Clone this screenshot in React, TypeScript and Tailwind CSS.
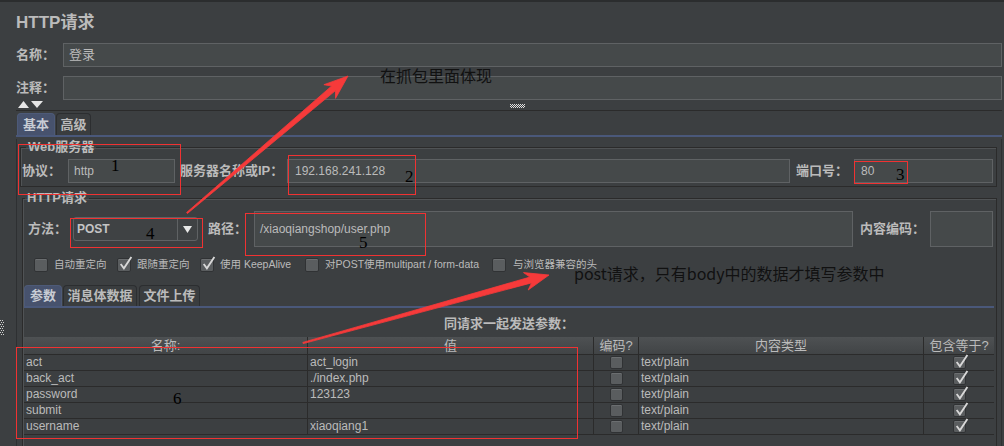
import React from "react";

function Label({ className = "", children }: { className?: string; children?: React.ReactNode }) {
  return <div className={`shrink-0 text-[13px] font-bold leading-[16px] text-[#bbbbbb] ${className}`}>{children}</div>;
}

function Input({ className = "", children }: { className?: string; children?: React.ReactNode }) {
  return (
    <div className={`flex shrink-0 items-center border border-[#5f6264] bg-[#45494a] px-[5px] text-[12px] text-[#bbbbbb] ${className}`}>
      {children}
    </div>
  );
}

function Box({ checked, className = "" }: { checked?: boolean; className?: string }) {
  return (
    <span className={`relative inline-flex shrink-0 rounded-[2px] border border-[#303234] bg-[#5a5d5f] shadow-[inset_0_1px_0_#6b6e70] ${className}`}>
      {checked && (
        <svg viewBox="0 0 14 14" className="absolute -top-[3px] left-0 h-[15px] w-[15px]" fill="none" stroke="#d8d8d8" strokeWidth="1.7">
          <path d="M2.5 7.5 L5.5 11.5 L12.5 1" />
        </svg>
      )}
    </span>
  );
}

function Tab({ active, className = "", children }: { active?: boolean; className?: string; children?: React.ReactNode }) {
  return (
    <div
      className={`flex h-full shrink-0 items-center justify-center rounded-t-[4px] border border-b-0 text-[13px] font-bold ${
        active ? "border-[#4d5a78] bg-[#47526d] text-[#c8ccd4]" : "border-[#2c2e30] bg-[#3a3d3f] text-[#bbbbbb]"
      } ${className}`}
    >
      {children}
    </div>
  );
}

const rows = [
  ["act", "act_login"],
  ["back_act", "./index.php"],
  ["password", "123123"],
  ["submit", ""],
  ["username", "xiaoqiang1"],
];

export default function App() {
  return (
    <div className="relative h-[446px] w-[1004px] overflow-hidden border-t-2 border-[#2b2d2e] bg-[#3c3f41] font-['Liberation_Sans','Noto_Sans_CJK_SC',sans-serif] text-[#bbbbbb]">
      {/* left splitter grip */}
      <svg className="absolute left-0 top-[318px]" width="4" height="16" viewBox="0 0 4 16">
        {[0, 2, 4, 6, 8, 10, 12, 14].map((y) => (
          <g key={y} fill="#d0d0d0">
            <rect x={y % 4 === 0 ? 0 : 1} y={y} width="1" height="1" />
            <rect x={y % 4 === 0 ? 2 : 3} y={y} width="1" height="1" />
          </g>
        ))}
      </svg>

      <div className="pl-[16px] pr-[2px]">
        <div className="mt-[11px] h-[20px] text-[17px] font-bold leading-[20px] text-[#bbbbbb]">HTTP请求</div>

        <div className="mt-[10px] flex items-center">
          <Label className="w-[47px]">名称：</Label>
          <Input className="h-[24px] w-[939px] px-[4px] text-[13px]">登录</Input>
        </div>
        <div className="mt-[9px] flex items-center">
          <Label className="w-[47px]">注释：</Label>
          <Input className="h-[24px] w-[939px]" />
        </div>

        <div className="relative flex h-[11px] items-start border-b border-[#2b2b2b]">
          <svg className="ml-[2px] mt-[1px]" width="26" height="7" viewBox="0 0 26 7">
            <path d="M0 7 L5.5 0 L11 7 Z" fill="#e6e6e6" />
            <path d="M13 0 L25 0 L19 7 Z" fill="#e6e6e6" />
          </svg>
          <svg className="ml-[466px] mt-[4px]" width="15" height="4" viewBox="0 0 15 4">
            {[0, 2, 4, 6, 8, 10, 12, 14].map((x) => (
              <g key={x} fill="#e0e0e0">
                <rect x={x} y={0} width="1" height="1" />
                <rect x={x + 1} y={1} width="1" height="1" />
                <rect x={x} y={2} width="1" height="1" />
                <rect x={x + 1} y={3} width="1" height="1" />
              </g>
            ))}
          </svg>
        </div>

        {/* main tabs */}
        <div className="ml-[1px] mt-[2px] flex h-[22px] items-end">
          <Tab active className="w-[38px]">基本</Tab>
          <Tab className="ml-[1px] h-[20px] w-[35px]">高级</Tab>
        </div>
        <div className="h-[2px] bg-[#4a587a]" />

        <div className="h-[320px] border-x border-[#2e3032]">
          {/* Web服务器 */}
          <fieldset className="ml-[3px] mt-[2px] w-[977px] border border-[#2b2b2b] pb-[3px] pl-[1px] pt-[4px] shadow-[inset_1px_1px_0_#505355]">
            <legend className="ml-[4px] h-[16px] px-[2px] text-[13px] font-bold leading-[16px] text-[#bbbbbb]">Web服务器</legend>
            <div className="flex items-center">
              <Label className="w-[46px]">协议：</Label>
              <Input className="h-[24px] w-[107px]">http</Input>
              <Label className="ml-[5px] w-[107px]">服务器名称或IP：</Label>
              <Input className="h-[24px] w-[503px] px-[7px]">192.168.241.128</Input>
              <Label className="ml-[6px] w-[58px]">端口号：</Label>
              <Input className="h-[24px] w-[139px] px-[6px] text-[#b4bccb]">80</Input>
            </div>
          </fieldset>

          {/* HTTP请求 */}
          <fieldset className="ml-[5px] mt-[3px] h-[280px] w-[975px] border border-[#2b2b2b] pt-[5px] shadow-[inset_1px_1px_0_#505355]">
            <legend className="ml-[2px] h-[16px] px-[2px] text-[13px] font-bold leading-[16px] text-[#bbbbbb]">HTTP请求</legend>
            <div className="flex h-[36px] items-center pl-[5px]">
              <Label className="w-[45px]">方法：</Label>
              <div className="flex h-[24px] w-[125px] shrink-0 items-center rounded-[3px] border border-[#5f6264] bg-[#3f4244]">
                <span className="flex-1 pl-[3px] text-[12px] font-bold text-[#c4c4c4]">POST</span>
                <span className="flex h-full w-[20px] items-center justify-center border-l border-[#5f6264]">
                  <svg width="9" height="7" viewBox="0 0 9 7">
                    <path d="M0 0 L9 0 L4.5 7 Z" fill="#e8e8e8" />
                  </svg>
                </span>
              </div>
              <Label className="ml-[10px] w-[46px]">路径：</Label>
              <Input className="h-[36px] w-[599px]">/xiaoqiangshop/user.php</Input>
              <Label className="ml-[7px] w-[70px]">内容编码：</Label>
              <Input className="h-[36px] w-[63px]" />
            </div>

            <div className="mt-[11px] flex h-[14px] items-center pl-[11px] text-[10.5px] text-[#bbbbbb]">
              <div className="flex w-[83px] items-center gap-[6px]">
                <Box className="h-[14px] w-[14px]" />
                <span>自动重定向</span>
              </div>
              <div className="flex w-[83px] items-center gap-[6px]">
                <Box checked className="h-[14px] w-[14px]" />
                <span>跟随重定向</span>
              </div>
              <div className="flex w-[105px] items-center gap-[6px]">
                <Box checked className="h-[14px] w-[14px]" />
                <span>使用 KeepAlive</span>
              </div>
              <div className="flex w-[187px] items-center gap-[6px]">
                <Box className="h-[14px] w-[14px]" />
                <span>对POST使用multipart / form-data</span>
              </div>
              <div className="flex items-center gap-[7px]">
                <Box className="h-[14px] w-[14px]" />
                <span>与浏览器兼容的头</span>
              </div>
            </div>

            {/* sub tabs */}
            <div className="ml-[1px] mt-[13px] flex h-[21px] items-end">
              <Tab active className="w-[38px]">参数</Tab>
              <Tab className="ml-[1px] h-[20px] w-[74px]">消息体数据</Tab>
              <Tab className="ml-[2px] h-[20px] w-[61px]">文件上传</Tab>
            </div>
            <div className="ml-[1px] h-[2px] w-[970px] bg-[#4a587a]" />

            <div className="ml-[1px] w-[970px]">
              <div className="pt-[8px] text-center text-[13px] font-bold leading-[16px] text-[#bbbbbb]">同请求一起发送参数：</div>
              <div className="mt-[5px] border-b border-[#2b2b2b]">
                <div className="grid h-[17px] grid-cols-[284px_286px_45px_285px_70px] bg-gradient-to-b from-[#4e5153] to-[#414446] text-[13px] leading-[17px] text-[#bbbbbb]">
                  <div className="border-r border-[#2b2b2b] text-center">名称:</div>
                  <div className="border-r border-[#2b2b2b] text-center">值</div>
                  <div className="border-r border-[#2b2b2b] text-center">编码?</div>
                  <div className="border-r border-[#2b2b2b] text-center">内容类型</div>
                  <div className="text-center">包含等于?</div>
                </div>
                {rows.map(([name, value]) => (
                  <div
                    key={name}
                    className="grid h-[16px] grid-cols-[284px_286px_45px_285px_70px] border-t border-[#2b2b2b] text-[12px] leading-[15px] text-[#bbbbbb]"
                  >
                    <div className="border-r border-[#2b2b2b] pl-[2px]">{name}</div>
                    <div className="border-r border-[#2b2b2b] pl-[2px]">{value}</div>
                    <div className="flex items-center justify-center border-r border-[#2b2b2b]">
                      <Box className="h-[13px] w-[13px]" />
                    </div>
                    <div className="border-r border-[#2b2b2b] pl-[2px]">text/plain</div>
                    <div className="flex items-center justify-center">
                      <Box checked className="h-[13px] w-[13px]" />
                    </div>
                  </div>
                ))}
              </div>
            </div>
          </fieldset>
        </div>
      </div>

      {/* annotations */}
      <div className="pointer-events-none absolute left-[18px] top-[142px] h-[51px] w-[163px] border border-[#f03232]" />
      <div className="pointer-events-none absolute left-[288px] top-[153px] h-[40px] w-[128px] border border-[#f03232]" />
      <div className="pointer-events-none absolute left-[854px] top-[159px] h-[23px] w-[54px] border border-[#f03232]" />
      <div className="pointer-events-none absolute left-[70px] top-[216px] h-[30px] w-[133px] border border-[#f03232]" />
      <div className="pointer-events-none absolute left-[245px] top-[211px] h-[43px] w-[181px] border border-[#f03232]" />
      <div className="pointer-events-none absolute left-[16px] top-[345px] h-[92px] w-[562px] border border-[#f03232]" />

      <div className="absolute left-[111px] top-[155px] font-['Liberation_Serif',serif] text-[17px] leading-none text-black">1</div>
      <div className="absolute left-[405px] top-[166px] font-['Liberation_Serif',serif] text-[17px] leading-none text-black">2</div>
      <div className="absolute left-[896px] top-[164px] font-['Liberation_Serif',serif] text-[17px] leading-none text-black">3</div>
      <div className="absolute left-[146px] top-[223px] font-['Liberation_Serif',serif] text-[17px] leading-none text-black">4</div>
      <div className="absolute left-[359px] top-[232px] font-['Liberation_Serif',serif] text-[17px] leading-none text-black">5</div>
      <div className="absolute left-[173px] top-[388px] font-['Liberation_Serif',serif] text-[17px] leading-none text-black">6</div>

      <div className="absolute left-[380px] top-[65px] font-['Noto_Sans_CJK_SC',sans-serif] text-[16px] leading-none text-[#111111]">在抓包里面体现</div>
      <div className="absolute left-[574px] top-[263px] font-['Noto_Sans_CJK_SC',sans-serif] text-[16px] leading-none text-[#111111]">
        post请求，只有body中的数据才填写参数中
      </div>

      <svg className="pointer-events-none absolute left-0 top-0" width="1004" height="446" viewBox="0 0 1004 446">
        <polygon
          points="187.4,211.5 335.5,88.6 335.5,96.4 348,74 323.9,82.7 331.6,84.0 186.6,210.5"
          fill="#f63a3a"
          stroke="#f63a3a"
          strokeWidth="0.8"
          strokeLinejoin="round"
        />
        <polygon
          points="303.2,341.6 531.5,280.9 528.2,288.0 549,273 523.5,270.6 529.9,275.1 302.8,340.4"
          fill="#f63a3a"
          stroke="#f63a3a"
          strokeWidth="0.8"
          strokeLinejoin="round"
        />
      </svg>
    </div>
  );
}
